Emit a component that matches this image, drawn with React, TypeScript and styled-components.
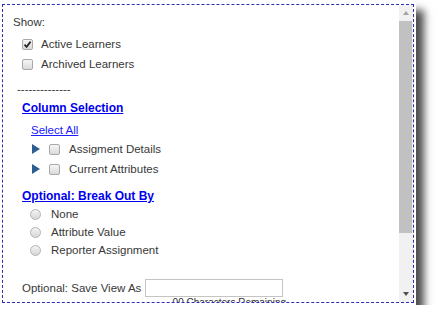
import styled, { createGlobalStyle } from 'styled-components';

const GlobalStyle = createGlobalStyle`
  html, body {
    margin: 0;
    padding: 0;
    background: #fff;
  }
  body {
    font-family: "Liberation Sans", Arial, sans-serif;
  }
`;

const Frame = styled.div`
  margin-top: 1px;
  width: 416px;
  height: 304px;
  padding: 3px 2px 2px 2px;
  box-sizing: border-box;
  background: #fff;
  box-shadow: 8px 9px 8px rgba(0, 0, 0, 0.7);
`;

const Panel = styled.div`
  height: 100%;
  box-sizing: border-box;
  border: 1px dashed #2e2eb0;
  display: flex;
`;

const Content = styled.div`
  flex: 1;
  overflow: hidden;
  padding: 7px 0 0 10px;
  color: #383838;
  font-size: 11.5px;
`;

const Label = styled.div`
  line-height: 20px;
`;

const List = styled.div<{ $top: number }>`
  display: flex;
  flex-direction: column;
  margin-top: ${p => p.$top}px;
`;

const Row = styled.div<{ $indent: number; $h?: number; $gap?: number }>`
  display: flex;
  align-items: center;
  height: ${p => p.$h ?? 20}px;
  padding-left: ${p => p.$indent}px;
  gap: ${p => p.$gap ?? 8}px;
`;

const Box = styled.span`
  width: 11px;
  height: 11px;
  box-sizing: border-box;
  border: 1px solid #a9a9a9;
  border-radius: 2px;
  background: linear-gradient(#f6f6f6, #dadada);
  display: flex;
  align-items: center;
  justify-content: center;
`;

const Radio = styled.span`
  width: 11px;
  height: 11px;
  box-sizing: border-box;
  border: 1px solid #b4b4b4;
  border-radius: 50%;
  background: linear-gradient(#f4f4f4, #d6d6d6);
`;

const Dashes = styled.div`
  margin: 6px 0 0 4px;
  line-height: 18px;
`;

const Heading = styled.a<{ $top: number }>`
  display: block;
  width: max-content;
  margin: ${p => p.$top}px 0 0 9px;
  line-height: 18px;
  font-size: 12px;
  font-weight: bold;
  color: #0000ee;
  text-decoration: underline;
  cursor: pointer;
`;

const SelectAll = styled.a`
  display: block;
  width: max-content;
  margin: 4px 0 0 18px;
  line-height: 18px;
  color: #2020ff;
  text-decoration: underline;
  cursor: pointer;
`;

const SaveRow = styled.div`
  display: flex;
  align-items: center;
  margin: 20px 0 0 9px;
  gap: 4px;
`;

const NameInput = styled.input`
  width: 138px;
  height: 18px;
  box-sizing: border-box;
  border: 1px solid #c4c4c4;
  padding: 0 3px;
  font: inherit;
  outline: none;
`;

const Remaining = styled.div`
  width: 273px;
  text-align: right;
  font-size: 10px;
  line-height: 12px;
  color: #333;
`;

const ScrollBar = styled.div`
  width: 14px;
  background: #f1f1f1;
  display: flex;
  flex-direction: column;
`;

const ScrollButton = styled.div`
  height: 16px;
  display: flex;
  align-items: center;
  justify-content: center;
`;

const Arrow = styled.span<{ $down?: boolean }>`
  width: 0;
  height: 0;
  border-left: 3px solid transparent;
  border-right: 3px solid transparent;
  ${p =>
    p.$down
      ? 'border-top: 4px solid #505050;'
      : 'border-bottom: 4px solid #a3a3a3;'}
`;

const Thumb = styled.div`
  height: 212px;
  margin-right: 1px;
  background: #c1c1c1;
`;

const Track = styled.div`
  flex: 1;
`;

const Check = () => (
  <svg width="9" height="9" viewBox="0 0 9 9">
    <path d="M1.5 4.6 L3.6 6.8 L7.6 1.6" stroke="#2a2a2a" strokeWidth="1.8" fill="none" />
  </svg>
);

const Expander = () => (
  <svg width="8" height="10" viewBox="0 0 8 10">
    <polygon points="0,0 8,5 0,10" fill="#2c5e91" />
  </svg>
);

export default function App() {
  return (
    <>
      <GlobalStyle />
      <Frame>
        <Panel>
          <Content>
            <Label>Show:</Label>
            <List $top={2}>
              <Row $indent={9}>
                <Box><Check /></Box>
                Active Learners
              </Row>
              <Row $indent={9}>
                <Box />
                Archived Learners
              </Row>
            </List>
            <Dashes>--------------</Dashes>
            <Heading $top={1}>Column Selection</Heading>
            <SelectAll>Select All</SelectAll>
            <List $top={0}>
              <Row $indent={19} $gap={9}>
                <Expander />
                <Box />
                <span>Assigment Details</span>
              </Row>
              <Row $indent={19} $gap={9}>
                <Expander />
                <Box />
                <span>Current Attributes</span>
              </Row>
            </List>
            <Heading $top={8}>Optional: Break Out By</Heading>
            <List $top={0}>
              <Row $indent={17} $h={18} $gap={10}>
                <Radio />
                None
              </Row>
              <Row $indent={17} $h={18} $gap={10}>
                <Radio />
                Attribute Value
              </Row>
              <Row $indent={17} $h={18} $gap={10}>
                <Radio />
                Reporter Assignment
              </Row>
            </List>
            <SaveRow>
              Optional: Save View As
              <NameInput />
            </SaveRow>
            <Remaining>00 Characters Remaining</Remaining>
          </Content>
          <ScrollBar>
            <ScrollButton><Arrow /></ScrollButton>
            <Thumb />
            <Track />
            <ScrollButton><Arrow $down /></ScrollButton>
          </ScrollBar>
        </Panel>
      </Frame>
    </>
  );
}
